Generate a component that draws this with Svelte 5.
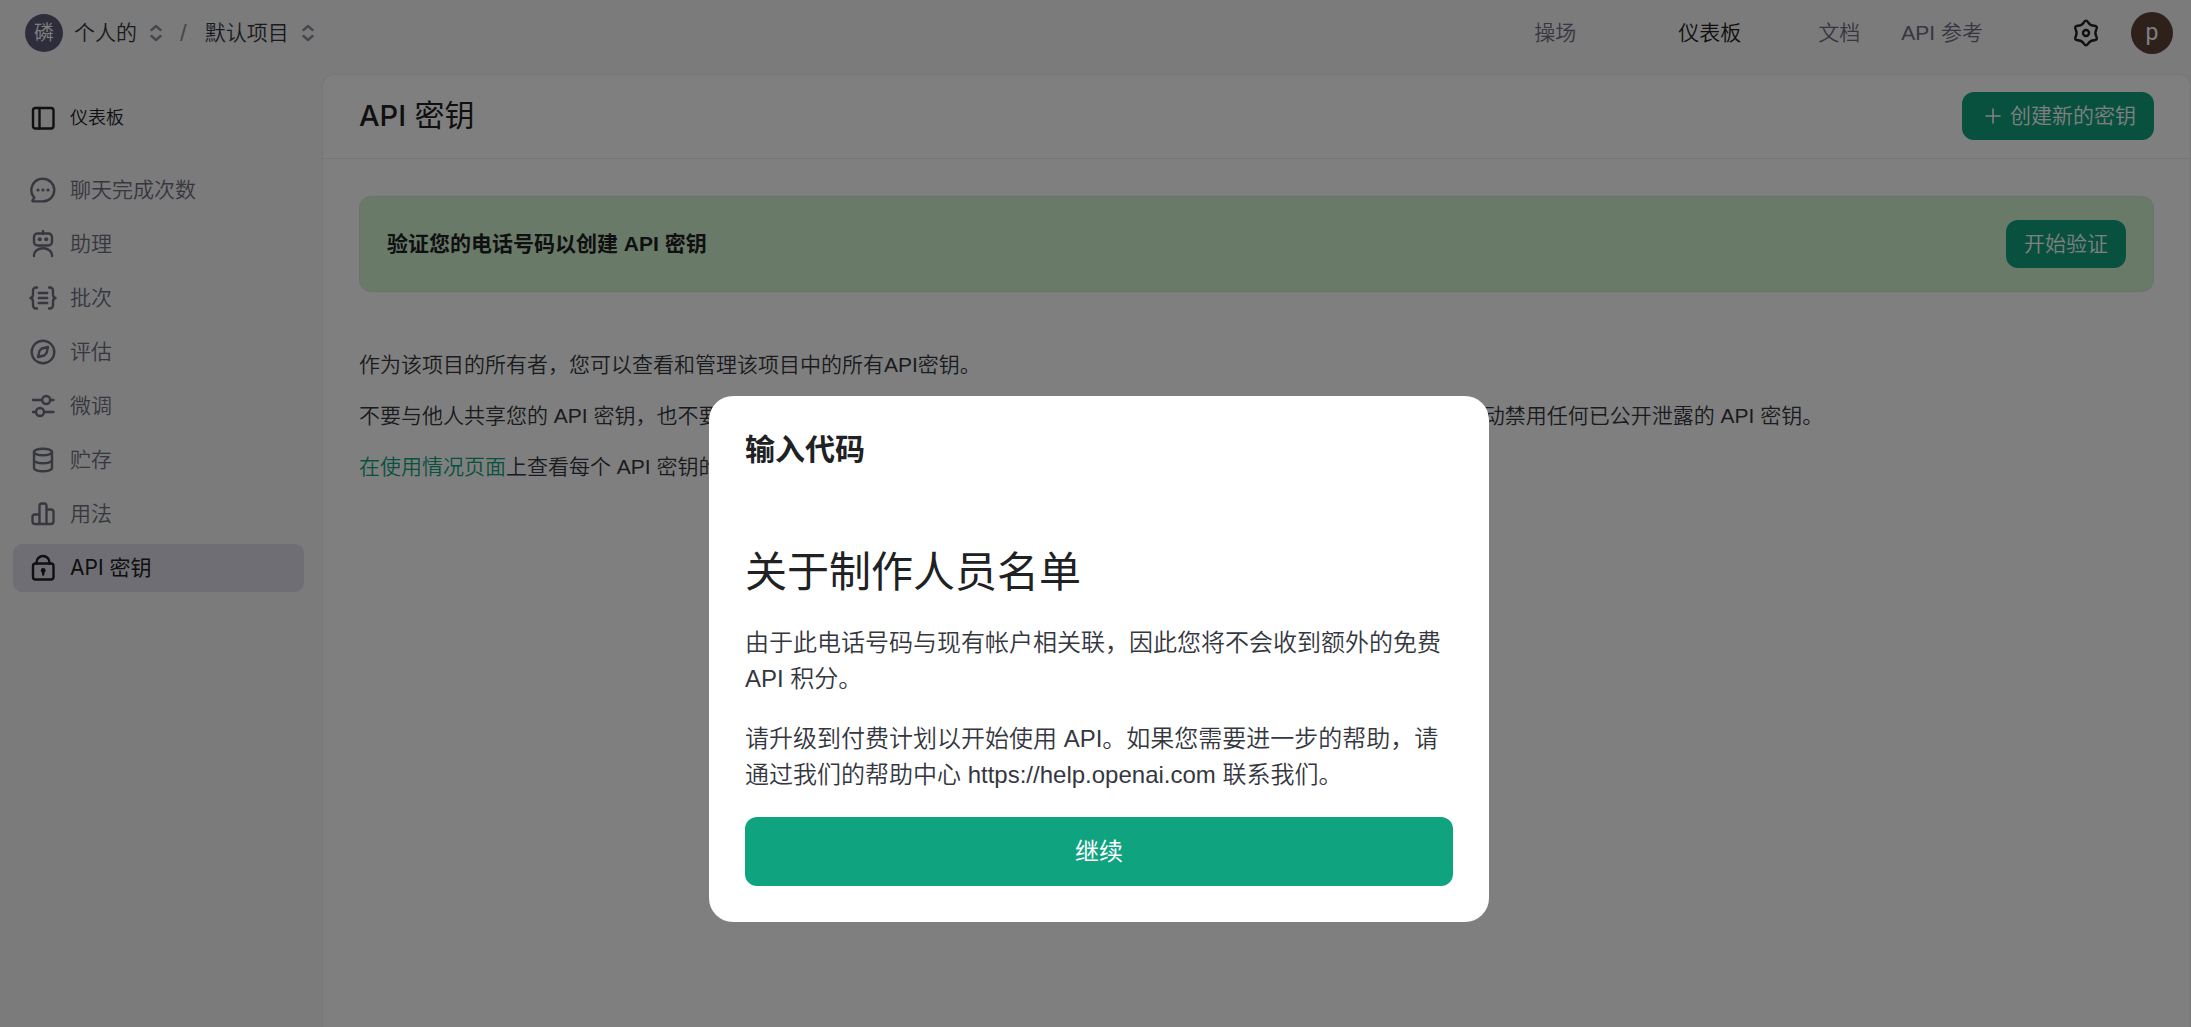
<script>
  let open = $state(true);
  let current = $state('keys');

  const items = [
    { id: 'chat', label: '聊天完成次数' },
    { id: 'assistants', label: '助理' },
    { id: 'batches', label: '批次' },
    { id: 'evals', label: '评估' },
    { id: 'tuning', label: '微调' },
    { id: 'storage', label: '贮存' },
    { id: 'usage', label: '用法' },
    { id: 'keys', label: 'API 密钥' }
  ];
</script>

{#snippet chevrons()}
  <svg class="chevrons" width="12" height="18" viewBox="0 0 12 18">
    <path d="M1.5 6 6 2l4.5 4M1.5 12 6 16l4.5-4" />
  </svg>
{/snippet}

{#snippet icon(id)}
  <svg class="icon" width="28" height="28" viewBox="0 0 28 28">
    {#if id === 'panel'}
      <rect x="4" y="4" width="20.5" height="20.5" rx="2.5" />
      <path d="M10.5 4v20.5" />
    {:else if id === 'chat'}
      <path d="M14 2.8a11.3 11.3 0 1 1 0 22.6H4.200c-.8 0-1-.8-.5-1.300l1.600-2.500A11.3 11.3 0 0 1 14 2.800Z" />
      <g class="solid"><circle cx="9" cy="14" r="1.6" /><circle cx="14" cy="14" r="1.6" /><circle cx="19" cy="14" r="1.6" /></g>
    {:else if id === 'assistants'}
      <rect x="5" y="3.5" width="18" height="12" rx="3.5" />
      <path d="M14 1v2.5M5 26v-.8a9 7 0 0 1 18 0v.8" />
      <g class="solid"><circle cx="10.8" cy="9.3" r="2" /><circle cx="17.2" cy="9.3" r="2" /></g>
    {:else if id === 'batches'}
      <path d="M8 3.500H7A3 3 0 0 0 4 6.500v4c0 2-1 3.200-2.500 3.500C3 14.300 4 15.500 4 17.500v4a3 3 0 0 0 3 3h1M20 3.500h1a3 3 0 0 1 3 3v4c0 2 1 3.200 2.500 3.500-1.500.3-2.500 1.500-2.500 3.500v4a3 3 0 0 1-3 3h-1M9.800 9h8.400M9.800 14h8.400M9.800 19h8.400" />
    {:else if id === 'evals'}
      <circle cx="14" cy="14" r="11.3" />
      <path d="m19 9-1.500 6.200-2.300 2.300L9 19l1.500-6.200 2.300-2.300Z" />
    {:else if id === 'tuning'}
      <path d="M4 8h9M21 8h3.500M4 20h3M15 20h9.500" />
      <circle cx="17.2" cy="8" r="4" /><circle cx="11" cy="20" r="4" />
    {:else if id === 'storage'}
      <ellipse cx="14" cy="6" rx="9" ry="3.3" />
      <path d="M5 6v16c0 1.800 4 3.300 9 3.300s9-1.500 9-3.300V6M5 14c0 1.800 4 3.300 9 3.300s9-1.500 9-3.300" />
    {:else if id === 'usage'}
      <path d="M10.500 24H6a2.500 2.500 0 0 1-2.500-2.500v-5A2 2 0 0 1 5.500 14.500h5M10.500 24V6a2.500 2.500 0 0 1 2.500-2.500h2A2.500 2.500 0 0 1 17.500 6v18ZM17.500 9.500h4.500a2.500 2.500 0 0 1 2.500 2.500v9.500A2.500 2.500 0 0 1 22 24h-4.500" />
    {:else if id === 'keys'}
      <rect x="4" y="9.5" width="20.5" height="16" rx="2.5" />
      <path d="M7.500 9.500V8.500a6.500 6.500 0 0 1 13 0v1M14.200 17v3.500" />
      <circle class="solid" cx="14.2" cy="16.5" r="2.4" />
    {:else if id === 'gear'}
      <path d="M11.9 3.300Q14 0 16.100 3.300 18.250 6.640 22.200 6.800 26.100 7 24.300 10.500 22.500 14 24.300 17.500 26.100 21 22.200 21.200 18.250 21.360 16.100 24.700 14 28 11.900 24.700 9.750 21.360 5.800 21.200 1.900 21 3.700 17.500 5.500 14 3.700 10.500 1.900 7 5.800 6.800 9.750 6.640 11.900 3.300Z" />
      <circle cx="14" cy="14" r="3" />
    {/if}
  </svg>
{/snippet}

<div class="page">
  <header class="topbar">
    <span class="org-avatar">磷</span>
    <button class="crumb">个人的 {@render chevrons()}</button>
    <span class="slash">/</span>
    <button class="crumb">默认项目 {@render chevrons()}</button>

    <nav class="topnav">
      <a class="playground" href="#playground">操场</a>
      <a class="dashboard" href="#dashboard">仪表板</a>
      <a class="docs" href="#docs">文档</a>
      <a href="#reference">API 参考</a>
    </nav>
    <button class="settings" aria-label="设置">{@render icon('gear')}</button>
    <button class="user-avatar">p</button>
  </header>

  <div class="body">
    <aside class="sidebar">
      <div class="side-title">{@render icon('panel')}<span>仪表板</span></div>
      <nav class="side-nav">
        {#each items as item}
          <a
            class="side-item"
            class:active={current === item.id}
            href="#{item.id}"
            onclick={() => (current = item.id)}
          >
            {@render icon(item.id)}
            <span>{item.label}</span>
          </a>
        {/each}
      </nav>
    </aside>

    <main class="content">
      <div class="content-head">
        <h1><span class="latin">API</span> 密钥</h1>
        <button class="btn create">
          <svg width="16" height="16" viewBox="0 0 16 16"><path d="M8 1v14M1 8h14" /></svg>
          创建新的密钥
        </button>
      </div>

      <div class="content-body">
        <div class="banner">
          <strong>验证您的电话号码以创建 API 密钥</strong>
          <button class="btn" onclick={() => (open = true)}>开始验证</button>
        </div>
        <p>作为该项目的所有者，您可以查看和管理该项目中的所有API密钥。</p>
        <p>不要与他人共享您的 API 密钥，也不要在浏览器或其他客户端代码中公开它。为了保护您帐户的安全，OpenAI可能还会自动禁用任何已公开泄露的 API 密钥。</p>
        <p><a href="#usage">在使用情况页面</a>上查看每个 API 密钥的使用情况。</p>
      </div>
    </main>
  </div>
</div>

{#if open}
  <div class="backdrop">
    <div class="modal" role="dialog" aria-modal="true" aria-labelledby="modal-title">
      <h2 id="modal-title">输入代码</h2>
      <h3>关于制作人员名单</h3>
      <p>由于此电话号码与现有帐户相关联，因此您将不会收到额外的免费 API 积分。</p>
      <p>请升级到付费计划以开始使用 API。如果您需要进一步的帮助，请通过我们的帮助中心 https://help.openai.com 联系我们。</p>
      <button class="continue" onclick={() => (open = false)}>继续</button>
    </div>
  </div>
{/if}

<style>
  :global(body) {
    background: #f6f6f6;
    font-family: 'Liberation Sans', 'Noto Sans CJK SC', sans-serif;
    font-size: 21px;
    font-weight: 350;
    line-height: 30px;
    color: #353740;
  }

  * {
    box-sizing: border-box;
  }

  button {
    font: inherit;
    color: inherit;
    border: none;
    background: none;
    padding: 0;
    cursor: pointer;
  }

  a {
    color: inherit;
    text-decoration: none;
  }

  svg {
    flex: none;
    fill: none;
    stroke: currentColor;
    stroke-width: 2.4;
    stroke-linecap: round;
    stroke-linejoin: round;
  }

  .solid {
    fill: currentColor;
    stroke: none;
  }

  .page {
    min-height: 100vh;
    display: flex;
    flex-direction: column;
  }

  /* Top bar */
  .topbar {
    height: 74px;
    display: flex;
    align-items: center;
    padding: 0 18px 8px 25px;
  }

  .org-avatar {
    width: 38px;
    height: 38px;
    border-radius: 50%;
    background: #5d5b76;
    color: #fff;
    font-size: 20px;
    line-height: 38px;
    text-align: center;
    margin-right: 11px;
  }

  .crumb {
    display: flex;
    align-items: center;
    gap: 13px;
  }

  .chevrons {
    color: #8e8ea0;
  }

  .slash {
    color: #8e8ea0;
    font-size: 24px;
    margin: 0 18px;
  }

  .topnav {
    margin-left: auto;
    margin-right: 89px;
    display: flex;
    color: #6e6e80;
  }

  .playground {
    margin-right: 102px;
  }

  .dashboard {
    color: #202123;
    margin-right: 77px;
  }

  .docs {
    margin-right: 41px;
  }

  .settings {
    display: flex;
    color: #202123;
    margin-right: 31px;
  }

  .user-avatar {
    width: 42px;
    height: 42px;
    border-radius: 50%;
    background: #5d4037;
    color: #fff;
    font-family: Roboto, sans-serif;
    font-weight: 400;
    font-size: 23px;
  }

  /* Sidebar */
  .body {
    flex: 1;
    display: flex;
  }

  .sidebar {
    width: 322px;
    flex: none;
    padding: 29px 18px 0 13px;
  }

  .side-title {
    display: flex;
    align-items: center;
    gap: 13px;
    padding-left: 16px;
    font-size: 18px;
    color: #202123;
    margin-bottom: 33px;
  }

  .side-nav {
    display: flex;
    flex-direction: column;
    gap: 6px;
  }

  .side-item {
    display: flex;
    align-items: center;
    gap: 13px;
    height: 48px;
    padding-left: 16px;
    border-radius: 9px;
    color: #6e6e80;
  }

  .side-item.active {
    background: #dedde8;
    color: #202123;
    font-family: Inter, 'Noto Sans CJK SC', sans-serif;
    font-weight: 400;
  }

  /* Main panel */
  .content {
    flex: 1;
    min-width: 0;
    background: #fff;
    border: 1px solid #ececf1;
    border-bottom: none;
    border-radius: 12px 12px 0 0;
  }

  .content-head {
    display: flex;
    align-items: center;
    justify-content: space-between;
    padding: 17px 36px 18px;
    border-bottom: 1px solid #ececf1;
  }

  h1 {
    margin: 0;
    font-size: 30px;
    font-weight: 400;
    line-height: 36px;
    color: #202123;
  }

  .latin {
    font-family: Inter, sans-serif;
    font-size: 29px;
    font-weight: 500;
  }

  .btn {
    display: flex;
    align-items: center;
    height: 48px;
    padding: 0 18px;
    border-radius: 12px;
    background: #10a37f;
    color: #fff;
  }

  .create {
    gap: 9px;
    padding-left: 23px;
  }

  .create svg {
    stroke-width: 1.6;
  }

  .content-body {
    padding: 37px 36px;
  }

  .banner {
    display: flex;
    align-items: center;
    justify-content: space-between;
    padding: 23px 27px;
    border: 1px solid #d2e8d2;
    border-radius: 12px;
    background: #d2f4d3;
    margin-bottom: 58px;
  }

  .banner strong {
    font-weight: 700;
    color: #202123;
  }

  .content-body p {
    margin: 0 0 21px;
  }

  .content-body p a {
    color: #10a37f;
  }

  /* Modal */
  .backdrop {
    position: fixed;
    inset: 0;
    display: flex;
    justify-content: center;
    align-items: flex-start;
    padding: 396px 0 0 7px;
    background: rgba(0, 0, 0, 0.5);
  }

  .modal {
    width: 780px;
    padding: 36px;
    border-radius: 24px;
    background: #fff;
    font-size: 24px;
    line-height: 36px;
  }

  h2 {
    margin: 0 0 80px;
    font-size: 30px;
    font-weight: 700;
    color: #202123;
  }

  h3 {
    margin: 0 0 27px;
    font-size: 42px;
    font-weight: 400;
    line-height: 50px;
    color: #202123;
  }

  .modal p {
    margin: 0 0 24px;
  }

  .continue {
    width: 100%;
    height: 69px;
    border-radius: 12px;
    background: #10a37f;
    color: #fff;
    font-weight: 400;
  }
</style>
